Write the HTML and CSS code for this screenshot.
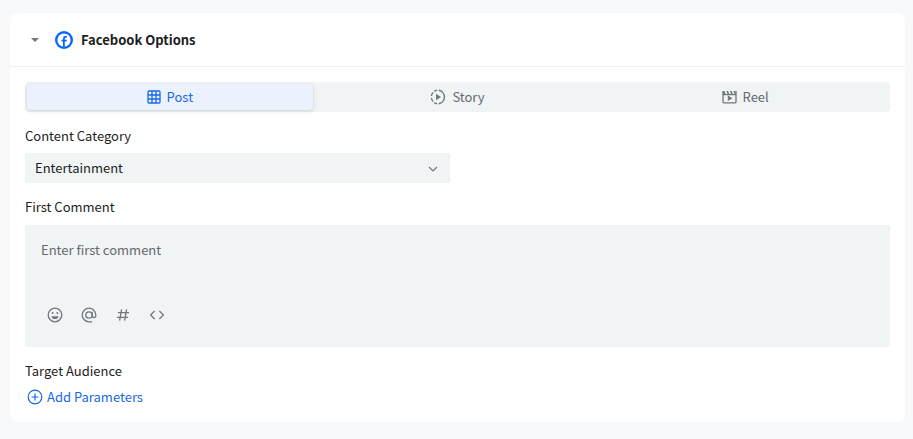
FILE: index.html
```html
<!DOCTYPE html>
<html lang="en">
<head>
    <meta charset="UTF-8">
    <meta name="viewport" content="width=device-width, initial-scale=1">
    <title>Facebook Options</title>
    <link rel="stylesheet" href="styles.css">
</head>
<body>
<section class="card">
    <div class="card-header">
        <button type="button" class="toggle" aria-label="Collapse" aria-expanded="true">
            <svg width="8" height="4" viewBox="0 0 8 4"><path d="M0 0h8L4 4z" fill="currentColor"/></svg>
        </button>
        <svg class="logo" width="18" height="18" viewBox="0 0 18 18">
            <circle cx="9" cy="9" r="9" fill="#0866ff"/>
            <circle cx="9" cy="9" r="6.6" fill="#fff"/>
            <path d="M8 15.8V10.6H6.5V8.8H8V7.9c0-2.1 1-3.1 3-3.1l1 .1v1.6h-.8c-1 0-1.4.4-1.4 1.3v1h2.1l-.3 1.8H9.8v5.2z" fill="#0866ff"/>
        </svg>
        <h2 class="title">Facebook Options</h2>
    </div>

    <form class="card-body">
        <div class="tabs" role="tablist">
            <button type="button" class="tab active" role="tab" aria-selected="true">
                <svg width="14" height="14" viewBox="0 0 14 14" fill="none" stroke="currentColor" stroke-width="1.3">
                    <rect x="1" y="1" width="12" height="12" rx="1"/>
                    <path d="M5 1v12M9 1v12M1 5h12M1 9h12"/>
                </svg>
                Post
            </button>
            <button type="button" class="tab" role="tab" aria-selected="false">
                <svg class="tab-icon" width="16" height="16" viewBox="0 0 16 16" fill="none" stroke="currentColor" stroke-width="1.4">
                    <path d="M8.8 1.3a6.8 6.8 0 0 1 0 13.4"/>
                    <path d="M7.2 1.3a6.8 6.8 0 0 0-2.9 1.1M3.1 3.4a6.8 6.8 0 0 0-1.7 3.5M1.4 9.1a6.8 6.8 0 0 0 1.7 3.5M4.3 13.6a6.8 6.8 0 0 0 2.9 1.1"/>
                    <path d="M6 4.8v6.4L11 8z" fill="currentColor" stroke="none"/>
                </svg>
                Story
            </button>
            <button type="button" class="tab" role="tab" aria-selected="false">
                <svg class="tab-icon" width="15" height="14" viewBox="0 0 15 14">
                    <path d="M1 1v11q0 .8.8.8h11.4q.8 0 .8-.8V1M1 4.6h13" fill="none" stroke="currentColor" stroke-width="1.3"/>
                    <path d="M1 1h1.5L4 4.8H1zM4.3 1h1.8l1.5 3.8H5.8zM7.9 1h1.8l1.5 3.8H9.4zM11.4 1h1.8l1 3.8h-1.3z" fill="currentColor"/>
                    <path d="M5.8 5.6v5.4L10.4 8.3z" fill="currentColor"/>
                </svg>
                Reel
            </button>
        </div>

        <div class="row">
            <div class="field">
                <label class="label" for="category">Content Category</label>
                <div class="select-wrap">
                    <select id="category" class="select">
                        <option>Entertainment</option>
                    </select>
                    <svg class="arrow" width="10" height="6" viewBox="0 0 10 6"><path d="M1 1l4 4 4-4" fill="none" stroke="currentColor" stroke-width="1.2"/></svg>
                </div>
            </div>
        </div>

        <div class="field">
            <label class="label label-wide" for="comment">First Comment</label>
            <div class="comment">
                <textarea id="comment" class="comment-text" placeholder="Enter first comment"></textarea>
                <div class="tools">
                    <button type="button" class="tool" aria-label="Emoji">
                        <svg width="16" height="16" viewBox="0 0 16 16" fill="none" stroke="currentColor" stroke-width="1.3">
                            <circle cx="8" cy="8" r="6.8"/>
                            <circle cx="5.6" cy="6" r="1" fill="currentColor" stroke="none"/>
                            <circle cx="10.4" cy="6" r="1" fill="currentColor" stroke="none"/>
                            <path d="M4.4 9.2h7.2a3.7 3.7 0 0 1-7.2 0z" fill="currentColor" stroke="none"/>
                        </svg>
                    </button>
                    <button type="button" class="tool" aria-label="Mention">
                        <svg width="16" height="16" viewBox="0 0 16 16" fill="none" stroke="currentColor" stroke-width="1.3">
                            <circle cx="8" cy="8" r="3.2"/>
                            <path d="M11.2 4.8v4a1.8 1.8 0 0 0 3.6 0V8A6.8 6.8 0 1 0 8 14.8h3.2"/>
                        </svg>
                    </button>
                    <button type="button" class="tool" aria-label="Hashtag">
                        <svg width="16" height="16" viewBox="0 0 16 16" fill="none" stroke="currentColor" stroke-width="1.3">
                            <path d="M6.6 2.4L4.6 13.6M11.6 2.4L9.6 13.6M3 5.6h11M2 10.4h11"/>
                        </svg>
                    </button>
                    <button type="button" class="tool" aria-label="Code">
                        <svg width="16" height="16" viewBox="0 0 16 16" fill="none" stroke="currentColor" stroke-width="1.3">
                            <path d="M5.6 4L1.6 8l4 4M10.4 4l4 4-4 4"/>
                        </svg>
                    </button>
                </div>
            </div>
        </div>

        <div class="field">
            <h3 class="label label-tight">Target Audience</h3>
            <button type="button" class="add">
                <svg width="16" height="16" viewBox="0 0 16 16" fill="none" stroke="currentColor" stroke-width="1.2">
                    <circle cx="8" cy="8" r="6.8"/>
                    <path d="M8 4.6v6.8M4.6 8h6.8"/>
                </svg>
                Add Parameters
            </button>
        </div>
    </form>
</section>
</body>
</html>
```
FILE: styles.css
```css
* {
    box-sizing: border-box;
    margin: 0;
    padding: 0;
}

body {
    padding: 13px 8px 16px 10px;
    background: #f8f9fb;
    color: #1c1e21;
    font-family: "Noto Sans CJK SC", "Open Sans", sans-serif;
    font-size: 13px;
    line-height: 20px;
}

button, select, textarea {
    border: 0;
    background: none;
    color: inherit;
    font: inherit;
}

button {
    cursor: pointer;
}

svg {
    display: block;
    flex-shrink: 0;
}

.card {
    background: #fff;
    border-radius: 8px;
}

.card-header {
    display: flex;
    align-items: center;
    height: 54px;
    padding: 0 15px;
    border-bottom: 1px solid #eff1f3;
}

.toggle {
    display: flex;
    align-items: center;
    justify-content: center;
    width: 20px;
    height: 20px;
    margin-right: 10px;
    color: #73777d;
}

.title {
    margin-left: 8px;
    font-size: 13px;
    font-weight: 700;
}

.card-body {
    padding: 15px;
}

.tabs {
    display: grid;
    grid-template-columns: repeat(3, 1fr);
    gap: 2px;
    height: 30px;
    padding: 2px;
    background: #f0f4f5;
    border-radius: 4px;
}

.tab {
    display: flex;
    align-items: center;
    justify-content: center;
    gap: 6px;
    border-radius: 4px;
    color: #65686e;
}

.tab-icon {
    color: #73777d;
}

.tab.active {
    background: #ebf2fd;
    box-shadow: 0 1px 4px rgba(0, 0, 0, 0.15);
    color: #1769e8;
}

.row {
    display: grid;
    grid-template-columns: 1fr 1fr;
    gap: 15px;
}

.field {
    margin-top: 14px;
}

.label {
    display: block;
    margin-bottom: 7px;
    font-size: 13px;
    font-weight: 400;
}

.label-wide {
    margin-bottom: 8px;
}

.label-tight {
    margin-bottom: 6px;
}

.select-wrap {
    position: relative;
}

.select {
    display: block;
    width: 100%;
    height: 30px;
    padding: 0 30px 0 10px;
    background: #f0f4f5;
    border-radius: 2px;
    appearance: none;
}

.arrow {
    position: absolute;
    top: 13px;
    right: 12px;
    color: #73777d;
    pointer-events: none;
}

.comment {
    padding: 15px 16px;
    background: #f0f4f5;
    border-radius: 2px;
}

.comment-text {
    display: block;
    width: 100%;
    height: 60px;
    outline: none;
    resize: none;
}

.comment-text::placeholder {
    color: #65686e;
}

.tools {
    display: flex;
    gap: 6px;
    height: 32px;
}

.tool {
    display: flex;
    align-items: center;
    justify-content: center;
    width: 28px;
    height: 30px;
    color: #73777d;
}

.add {
    display: flex;
    align-items: center;
    gap: 4px;
    padding-left: 2px;
    color: #1769e8;
}
```
